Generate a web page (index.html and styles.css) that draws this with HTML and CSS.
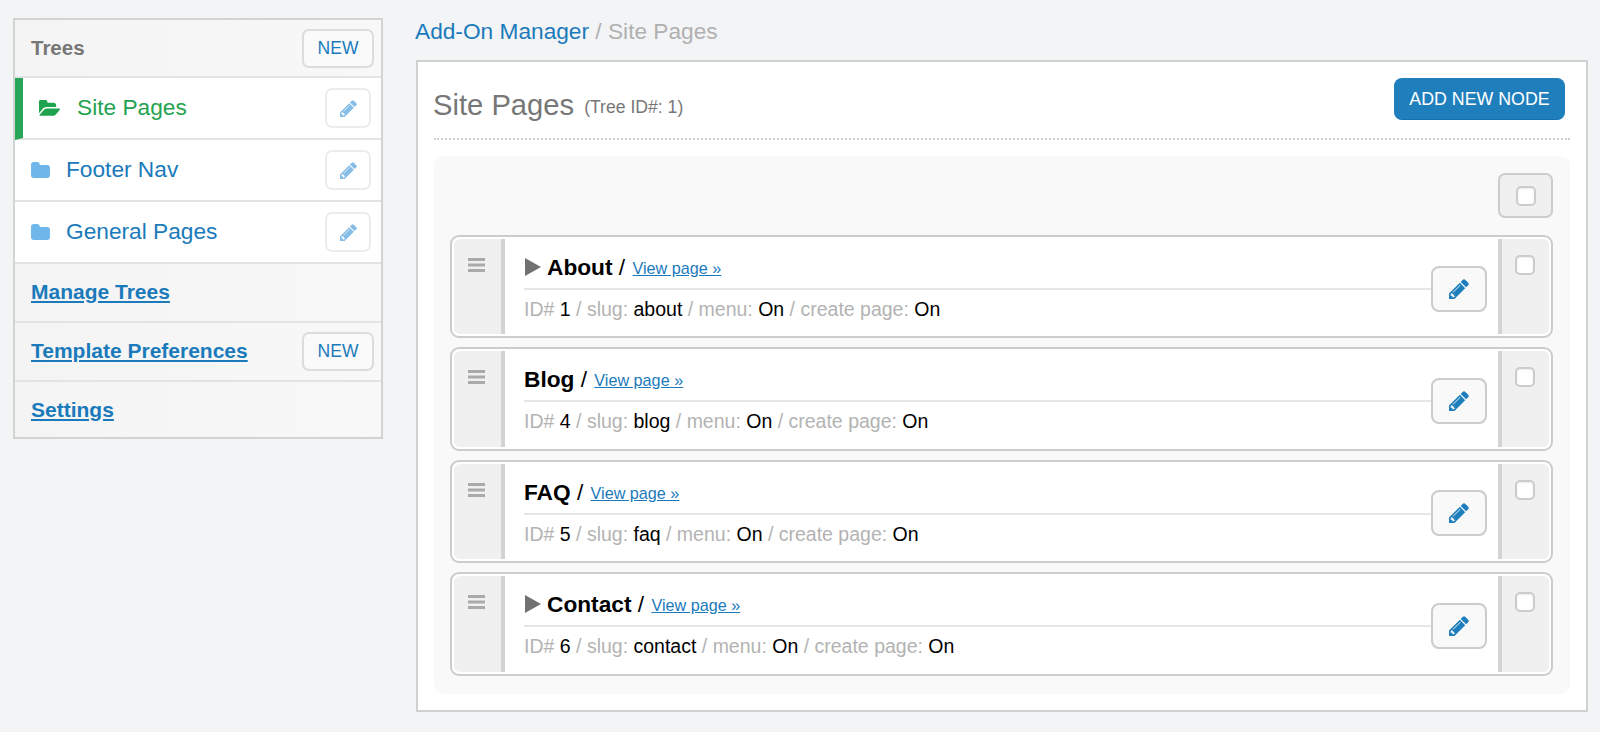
FILE: index.html
```html
<!DOCTYPE html>
<html lang="en">
	<head>
		<meta charset="UTF-8" />
		<title>Site Pages</title>
		<link rel="stylesheet" href="styles.css">
	</head>
	<body>
		<svg class="defs" width="0" height="0">
			<symbol id="pencil" viewBox="0 0 1536 1536"><path d="M363 1408l91-91-235-235-91 91v107h128v128h107zm523-928q0-22-22-22-10 0-17 7l-542 542q-7 7-7 17 0 22 22 22 10 0 17-7l542-542q7-7 7-17zm-54-192l416 416-832 832h-416v-416zm683 96q0 53-37 90l-166 166-416-416 166-165q36-38 90-38 53 0 91 38l235 234q37 39 37 91z"/></symbol>
			<symbol id="folder" viewBox="0 0 1664 1408"><path d="M1664 480v704q0 92-66 158t-158 66h-1216q-92 0-158-66t-66-158v-960q0-92 66-158t158-66h320q92 0 158 66t66 158v32h672q92 0 158 66t66 158z"/></symbol>
			<symbol id="folder-open" viewBox="0 0 1920 1408"><path d="M1845 803q0 35-35 73l-336 396q-43 51-120.500 86.500t-143.500 35.500h-1088q-34 0-60.500-13t-26.500-43q0-35 35-73l336-396q43-51 120.500-86.500t143.500-35.500h1088q34 0 60.500 13t26.500 43zm-343-344v160h-832q-94 0-197 47.500t-164 119.500l-337 396-5 6q0-4-.5-12.500t-.5-12.500v-960q0-92 66-158t158-66h320q92 0 158 66t66 158v32h544q92 0 158 66t66 158z"/></symbol>
			<symbol id="bars" viewBox="0 0 17 14"><rect width="17" height="3" y="0"/><rect width="17" height="3" y="5.500"/><rect width="17" height="3" y="11"/></symbol>
		</svg>

		<aside class="sidebar">
			<div class="side-row side-head">
				<span class="side-title">Trees</span>
				<a class="btn-new" href="#">NEW</a>
			</div>
			<div class="tree-row active">
				<svg class="folder-open"><use href="#folder-open"/></svg>
				<a href="#">Site Pages</a>
				<button class="btn-pencil"><svg><use href="#pencil"/></svg></button>
			</div>
			<div class="tree-row">
				<svg class="folder"><use href="#folder"/></svg>
				<a href="#">Footer Nav</a>
				<button class="btn-pencil"><svg><use href="#pencil"/></svg></button>
			</div>
			<div class="tree-row">
				<svg class="folder"><use href="#folder"/></svg>
				<a href="#">General Pages</a>
				<button class="btn-pencil"><svg><use href="#pencil"/></svg></button>
			</div>
			<div class="side-row"><a class="side-link" href="#">Manage Trees</a></div>
			<div class="side-row">
				<a class="side-link" href="#">Template Preferences</a>
				<a class="btn-new" href="#">NEW</a>
			</div>
			<div class="side-row"><a class="side-link" href="#">Settings</a></div>
		</aside>

		<main class="main">
			<div class="crumbs"><a href="#">Add-On Manager</a> / Site Pages</div>
			<section class="panel">
				<div class="panel-head">
					<h1>Site Pages</h1>
					<span class="tree-id">(Tree ID#: 1)</span>
					<a class="btn-add" href="#">ADD NEW NODE</a>
				</div>
				<div class="tree">
					<div class="tree-top">
						<label class="check-all"><input type="checkbox" /></label>
					</div>

					<div class="node">
						<div class="handle"><svg><use href="#bars"/></svg></div>
						<div class="node-main">
							<div class="node-title"><span class="arrow"></span><b>About</b> / <a href="#">View page »</a></div>
							<div class="node-meta">ID# <em>1</em> / slug: <em>about</em> / menu: <em>On</em> / create page: <em>On</em></div>
						</div>
						<button class="btn-edit"><svg><use href="#pencil"/></svg></button>
						<div class="node-check"><input type="checkbox" /></div>
					</div>

					<div class="node">
						<div class="handle"><svg><use href="#bars"/></svg></div>
						<div class="node-main">
							<div class="node-title"><b>Blog</b> / <a href="#">View page »</a></div>
							<div class="node-meta">ID# <em>4</em> / slug: <em>blog</em> / menu: <em>On</em> / create page: <em>On</em></div>
						</div>
						<button class="btn-edit"><svg><use href="#pencil"/></svg></button>
						<div class="node-check"><input type="checkbox" /></div>
					</div>

					<div class="node">
						<div class="handle"><svg><use href="#bars"/></svg></div>
						<div class="node-main">
							<div class="node-title"><b>FAQ</b> / <a href="#">View page »</a></div>
							<div class="node-meta">ID# <em>5</em> / slug: <em>faq</em> / menu: <em>On</em> / create page: <em>On</em></div>
						</div>
						<button class="btn-edit"><svg><use href="#pencil"/></svg></button>
						<div class="node-check"><input type="checkbox" /></div>
					</div>

					<div class="node">
						<div class="handle"><svg><use href="#bars"/></svg></div>
						<div class="node-main">
							<div class="node-title"><span class="arrow"></span><b>Contact</b> / <a href="#">View page »</a></div>
							<div class="node-meta">ID# <em>6</em> / slug: <em>contact</em> / menu: <em>On</em> / create page: <em>On</em></div>
						</div>
						<button class="btn-edit"><svg><use href="#pencil"/></svg></button>
						<div class="node-check"><input type="checkbox" /></div>
					</div>
				</div>
			</section>
		</main>
	</body>
</html>
```

FILE: styles.css
```css
* {
	box-sizing: border-box;
	margin: 0;
	padding: 0;
}

body {
	font-family: "Liberation Sans", Arial, sans-serif;
	background-color: #f3f4f6;
	color: #000;
	display: flex;
	align-items: flex-start;
	gap: 33px;
	padding: 18px 13px 0 13px;
	overflow: hidden;
}

.defs {
	display: block;
	position: absolute;
}

a {
	color: #1a7abb;
}

/* sidebar */
.sidebar {
	flex: none;
	width: 370px;
	border: 2px solid #d2d3d3;
	background: linear-gradient(90deg, #f4f4f4, #f8f8f8);
}

.side-row {
	height: 59px;
	padding: 0 7px 0 16px;
	display: flex;
	align-items: center;
	justify-content: space-between;
	border-bottom: 2px solid #e3e3e3;
}

.side-row.side-head {
	height: 58px;
}

.side-row:last-child {
	height: 55px;
	padding-top: 2px;
	border-bottom: none;
}

.side-title {
	font-size: 20.5px;
	font-weight: bold;
	color: #777;
}

.side-link {
	font-size: 21px;
	font-weight: bold;
	margin-top: -2px;
}

.btn-new {
	width: 72px;
	height: 39px;
	line-height: 35px;
	text-align: center;
	font-size: 17.5px;
	text-decoration: none;
	background: #fafafa;
	border: 2px solid #dcdcdc;
	border-radius: 7px;
}

.tree-row {
	height: 62px;
	padding: 0 10px 0 16px;
	display: flex;
	align-items: center;
	background: #fff;
	border-bottom: 2px solid #e3e3e3;
}

.tree-row a {
	font-size: 22.7px;
	text-decoration: none;
	margin: -2px 0 0 16px;
}

.tree-row.active {
	border-left: 8px solid #27a558;
}

.tree-row.active a {
	color: #1fa34f;
}

.folder {
	width: 19px;
	height: 16px;
	fill: #6fb6ea;
}

.folder-open {
	width: 22px;
	height: 16px;
	fill: #1fa34f;
}

.btn-pencil {
	margin-left: auto;
	width: 46px;
	height: 40px;
	background: #fff;
	border: 2px solid #ececec;
	border-radius: 7px;
	display: flex;
	align-items: center;
	justify-content: center;
}

.btn-pencil svg {
	width: 17px;
	height: 17px;
	fill: #86bde6;
}

/* main column */
.main {
	flex: none;
	width: 1172px;
}

.crumbs {
	height: 42px;
	margin-left: -1px;
	font-size: 22.7px;
	line-height: 26px;
	color: #b0b0b0;
}

.crumbs a {
	text-decoration: none;
}

.panel {
	height: 652px;
	background: #fff;
	border: 2px solid #cfd0d0;
	padding: 16px;
}

.panel-head {
	height: 62px;
	padding: 0 5px 8px 0;
	display: flex;
	align-items: center;
	border-bottom: 2px dotted #cfcfcf;
	margin-bottom: 16px;
	color: #777;
}

.panel-head h1 {
	font-size: 29.2px;
	font-weight: normal;
	margin: 2px 0 0 -1px;
}

.tree-id {
	font-size: 17.6px;
	margin: 7px 0 0 10px;
}

.btn-add {
	margin: -10px 0 0 auto;
	height: 42px;
	width: 171px;
	line-height: 42px;
	text-align: center;
	font-size: 17.8px;
	color: #fff;
	text-decoration: none;
	background: #1f7fbd;
	border-bottom: 1px solid #1572ae;
	border-radius: 8px;
}

.tree {
	height: 537.500px;
	background: #f9f9f9;
	border-radius: 9px;
	padding: 17px 17px 0 16px;
}

.tree-top {
	display: flex;
	justify-content: flex-end;
	margin-bottom: 17px;
}

.check-all {
	width: 55px;
	height: 45px;
	background: #f0f0f0;
	border: 2px solid #ccc;
	border-radius: 7px;
	display: flex;
	align-items: center;
	justify-content: center;
}

input[type="checkbox"] {
	appearance: none;
	display: block;
	width: 20px;
	height: 20px;
	background: #fff;
	border: 2px solid #ccc;
	border-radius: 5px;
	box-shadow: inset 0 1px 2px rgba(0, 0, 0, 0.08);
}

/* node rows */
.node {
	height: 103.400px;
	margin-bottom: 9px;
	padding: 2px;
	display: flex;
	background: #fff;
	border: 2px solid #ccc;
	border-radius: 9px;
}

.handle {
	flex: none;
	width: 51px;
	padding: 19px 0 0 14px;
	background: #f0f0f0;
	border-right: 4px solid #d3d3d3;
	border-radius: 6px 0 0 6px;
}

.handle svg {
	display: block;
	width: 17px;
	height: 14px;
	fill: #aaa;
}

.node-main {
	flex: 1;
	padding-top: 13px;
	margin-left: 19px;
}

.node-title {
	height: 38px;
	line-height: 30px;
	font-size: 22.7px;
	border-bottom: 2px solid #e6e6e6;
	white-space: nowrap;
}

.node-title a {
	font-size: 16.2px;
	margin-left: 1px;
	vertical-align: 1px;
}

.arrow {
	display: inline-block;
	width: 0;
	height: 0;
	margin: 0 6px 0 1px;
	vertical-align: -1px;
	border-style: solid;
	border-width: 9.500px 0 9.500px 16px;
	border-color: transparent transparent transparent #717171;
}

.node-meta {
	margin-top: 7px;
	font-size: 19.5px;
	line-height: 24px;
	color: #b3b3b3;
	white-space: nowrap;
}

.node-meta em {
	font-style: normal;
	color: #000;
}

.btn-edit {
	flex: none;
	align-self: center;
	width: 56px;
	height: 46px;
	margin-top: 4px;
	background: #f9f9f9;
	border: 2px solid #ccc;
	border-radius: 8px;
	display: flex;
	align-items: center;
	justify-content: center;
}

.btn-edit svg {
	width: 20px;
	height: 20px;
	fill: #1f7fbd;
}

.node-check {
	flex: none;
	width: 51px;
	margin-left: 11px;
	padding: 16px 0 0 13px;
	background: #f0f0f0;
	border-left: 4px solid #d3d3d3;
	border-radius: 0 6px 6px 0;
}
```
